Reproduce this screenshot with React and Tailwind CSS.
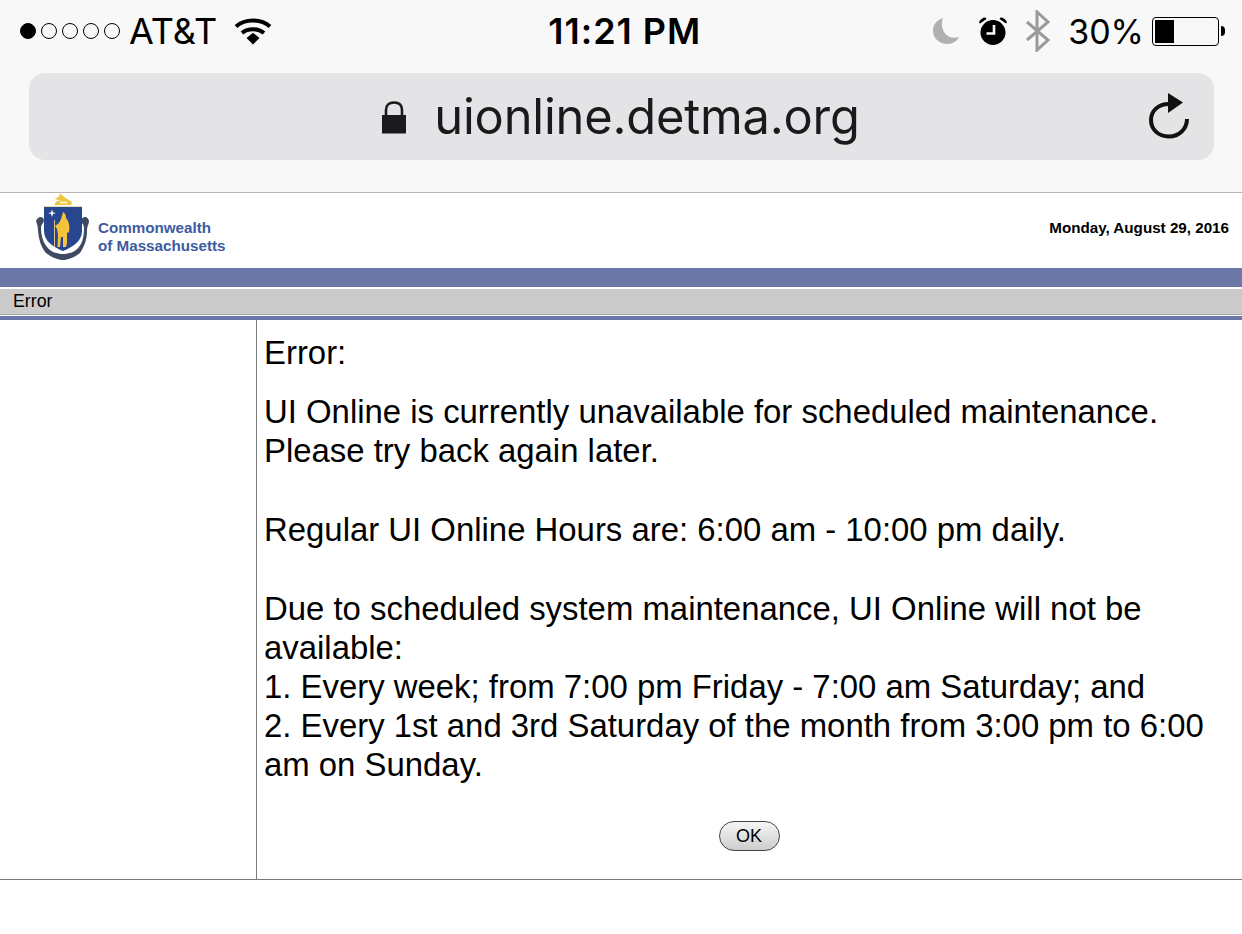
import React from "react"

const sans = "font-['Liberation_Sans',Arial,sans-serif]"
const ios = "font-['Inter','Liberation_Sans',sans-serif]"

const SignalDots = () => (
  <div className="flex items-center gap-[5px]">
    <span className="h-4 w-4 rounded-full border border-black bg-black" />
    {[0, 1, 2, 3].map((dot) => (
      <span key={dot} className="h-4 w-4 rounded-full border border-black" />
    ))}
  </div>
)

const Wifi = () => (
  <svg width="38" height="28" viewBox="0 0 38 28" fill="none">
    <path d="M2 9.5C11 1.5 27 1.5 36 9.5" stroke="#000" strokeWidth="4" />
    <path d="M8 16C14 11 24 11 30 16" stroke="#000" strokeWidth="4" />
    <path d="M12.5 21L19 15.8L25.5 21L19 27.5Z" fill="#000" />
  </svg>
)

const Moon = () => (
  <svg width="28" height="28" viewBox="0 0 28 28">
    <path d="M11 1C4 3 0.5 9 1 15C2 23 9 27 15 27C21 27 25 24 27 20C21 22 15 20 12 15C9.5 10.5 9.5 5 11 1Z" fill="#b0b0b0" />
  </svg>
)

const Alarm = () => (
  <svg width="30" height="30" viewBox="0 0 30 30">
    <circle cx="15" cy="16.5" r="12.5" fill="#000" />
    <path d="M1 6.5C2 3.5 4.5 1.5 7.5 1.5L8.5 3L2 7.5Z" fill="#000" />
    <path d="M29 6.5C28 3.5 25.5 1.5 22.5 1.5L21.5 3L28 7.5Z" fill="#000" />
    <path d="M16 9V17.5H8.5" fill="none" stroke="#f8f8f8" strokeWidth="2.6" />
  </svg>
)

const Bluetooth = () => (
  <svg width="26" height="42" viewBox="0 0 26 42" fill="none">
    <path d="M2 12L23 30L12 40V2L23 12L2 30" stroke="#9a9a9a" strokeWidth="3" />
  </svg>
)

const Battery = () => (
  <div className="flex items-center">
    <div className="h-[29px] w-[67px] rounded-[4px] border border-black p-[2px]">
      <div className="h-full w-[19px] bg-black" />
    </div>
    <span className="ml-[2px] h-[10px] w-[4px] rounded-r-full bg-black" />
  </div>
)

const Lock = () => (
  <svg width="26" height="34" viewBox="0 0 26 34" fill="none">
    <path d="M5 16V10C5 5 8 2.5 13 2.5C18 2.5 21 5 21 10V16" stroke="#1a1a1c" strokeWidth="2.6" />
    <rect x="1" y="15" width="24" height="18.5" fill="#1a1a1c" />
  </svg>
)

const Reload = () => (
  <svg width="42" height="46" viewBox="0 0 42 46" fill="none">
    <path d="M21 11C10 11 3 18 3 27C3 36 10 43.5 21 43.5C31 43.5 39 36 39 26" stroke="#111" strokeWidth="4" />
    <path d="M20 0L35 9.5L20 20Z" fill="#111" />
  </svg>
)

const Seal = () => (
  <svg width="58" height="70" viewBox="0 0 58 70">
    {/* crest */}
    <path d="M26 0C28 3 33 6 38 9L37 12H21C20 10 22 8 27 7C24 7 22 7 21 5C24 5 26 3 26 0Z" fill="#edc63f" />
    <path d="M26 9.5H33" stroke="#fff" strokeWidth="1.4" />
    {/* ribbon */}
    <path d="M2 28C4 23 9 23 10 27C10 30 7 31 7 35C7 42 9 49 13 54C17 59 23 61 29 61C35 61 41 59 45 54C49 49 50 42 50 35C50 31 47 30 47 27C49 23 54 23 55 28C55 31 53 33 53 38C53 47 50 54 46 60C41 64 34 67 29 67C24 67 17 64 12 60C7 54 5 47 4 38C4 33 3 31 2 28Z" fill="#3f4a60" />
    {/* shield */}
    <path d="M10 14H48V38C48 48 39 54 29 58C19 54 10 48 10 38Z" fill="#27468f" />
    <path d="M10 13.5H48" stroke="#e6dcae" strokeWidth="1" />
    <path d="M18 16.5L19 19.5L22 20L19 21L18 24L17 21L14 20L17 19.5Z" fill="#fff" />
    {/* figure */}
    <path d="M29 19C31 20 32 22 32 25C35 28 36 34 35 39L33 40L33 50L32 54H29L29 44L27 44L26 54H23.5L24 42L23 36L21 33L25 30C27 27 28 23 29 19Z" fill="#f3c33a" />
    <path d="M20.5 27V54" stroke="#d8c68a" strokeWidth="1" />
  </svg>
)

const App = () => {
  return (
    <div className={`h-[934px] w-[1242px] overflow-hidden bg-white text-black ${sans}`}>
      <header className="h-[193px] border-b border-[#b5b5b5] bg-[#f8f8f8]">
        <div className={`flex h-[62px] items-center pl-[20px] pr-[17px] ${ios}`}>
          <SignalDots />
          <span className="ml-[9px] text-[36px] font-normal">AT&amp;T</span>
          <span className="ml-[17px]"><Wifi /></span>
          <span className="ml-[276px] text-[36px] font-semibold tracking-[1px]">11:21 PM</span>
          <div className="ml-auto flex items-center">
            <Moon />
            <span className="ml-[18px]"><Alarm /></span>
            <span className="ml-[17px]"><Bluetooth /></span>
            <span className="ml-[17px] text-[34px]">30%</span>
            <span className="ml-[8px]"><Battery /></span>
          </div>
        </div>
        <div className="relative ml-[29px] mr-[28px] mt-[11px] flex h-[87px] items-center justify-center rounded-[16px] bg-[#e4e4e6]">
          <div className="ml-[-2px] flex items-center gap-[27px]">
            <Lock />
            <span className={`text-[48.8px] tracking-[-0.2px] text-[#1a1a1c] ${ios}`}>uionline.detma.org</span>
          </div>
          <span className="absolute right-[24px] top-[20px]"><Reload /></span>
        </div>
      </header>

      <div className="flex h-[75px] items-start justify-between">
        <div className="flex pl-[34px]">
          <Seal />
          <p className="mt-[26px] ml-[6px] text-[15.2px] leading-[18px] font-bold text-[#3e5a9f]">
            Commonwealth
            <br />
            of Massachusetts
          </p>
        </div>
        <p className="mt-[27px] mr-[13px] text-[15.2px] leading-[16px] font-bold">Monday, August 29, 2016</p>
      </div>

      <div className="h-[19px] bg-[#6b77a6]" />
      <div className="mt-[2px] flex h-[26px] items-center border-b border-[#a8a8a8] bg-[#cbcbcb] pl-[13px] text-[17.8px]">Error</div>
      <div className="mt-[1px] h-[4px] bg-[#6b77a6]" />

      <div className="flex h-[560px] border-b border-[#7a7a7a]">
        <div className="w-[257px] shrink-0 border-r border-[#7a7a7a]" />
        <div className="min-w-0 flex-1 pl-[7px] pr-[8px] text-[32.9px] leading-[39px]">
          <p className="mt-[13px]">Error:</p>
          <p className="mt-[20px]">
            UI Online is currently unavailable for scheduled maintenance.
            <br />
            Please try back again later.
          </p>
          <p className="mt-[40px]">Regular UI Online Hours are: 6:00 am - 10:00 pm daily.</p>
          <p className="mt-[40px]">
            Due to scheduled system maintenance, UI Online will not be available:
            <br />
            1. Every week; from 7:00 pm Friday - 7:00 am Saturday; and
            <br />
            2. Every 1st and 3rd Saturday of the month from 3:00 pm to 6:00 am on Sunday.
          </p>
          <div className="mt-[37px] flex justify-center">
            <button className="h-[30px] w-[61px] rounded-full border border-[#444] bg-gradient-to-b from-[#f6f6f6] to-[#cdcdcd] text-[18px] leading-none text-black">
              OK
            </button>
          </div>
        </div>
      </div>
    </div>
  )
}

export default App
